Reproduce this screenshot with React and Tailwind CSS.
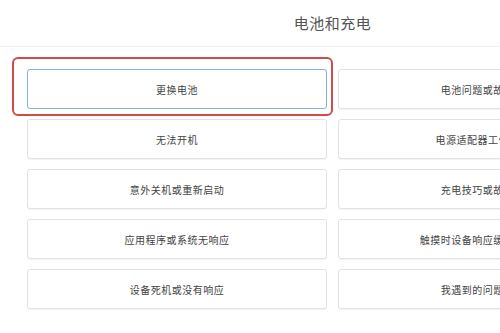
const leftItems = [
  "更换电池",
  "无法开机",
  "意外关机或重新启动",
  "应用程序或系统无响应",
  "设备死机或没有响应",
];

const rightItems = [
  "电池问题或故障排除",
  "电源适配器工作不正常",
  "充电技巧或故障排除",
  "触摸时设备响应缓慢或无响应",
  "我遇到的问题未列出",
];

const TopicButton = ({ label, active }) => (
  <div
    className={
      active
        ? "h-[40px] flex items-center justify-center rounded-[3px] border border-[#7fb1e3] bg-white text-[10px] tracking-[0.5px] text-[#444]"
        : "h-[40px] flex items-center justify-center rounded-[3px] border border-[#e2e2e2] bg-white shadow-[0_1px_1px_rgba(0,0,0,0.05)] text-[10px] tracking-[0.5px] text-[#444] whitespace-nowrap"
    }
  >
    {label}
  </div>
);

export default function App() {
  return (
    <div className="w-[500px] h-[333px] overflow-hidden bg-white font-['Noto_Sans_CJK_SC',sans-serif]">
      <div className="w-[665px]">
        {/* Header */}
        <div className="h-[47px] flex items-center justify-center border-b border-[#f1f1f1]">
          <h1 className="text-[15px] tracking-[0.5px] text-[#555] font-normal">电池和充电</h1>
        </div>

        {/* Topic grid */}
        <div className="grid grid-cols-[300px_300px] gap-x-[11px] gap-y-[10px] pt-[22px] pl-[27px]">
          {leftItems.map((label, i) => (
            <div key={label} className="contents">
              <div className="relative">
                {i === 0 && (
                  <div className="absolute -left-[15px] -top-[12px] -right-[6px] -bottom-[7px] rounded-[6px] border-2 border-[#d24a4a]" />
                )}
                <TopicButton label={label} active={i === 0} />
              </div>
              <TopicButton label={rightItems[i]} />
            </div>
          ))}
        </div>
      </div>
    </div>
  );
}
